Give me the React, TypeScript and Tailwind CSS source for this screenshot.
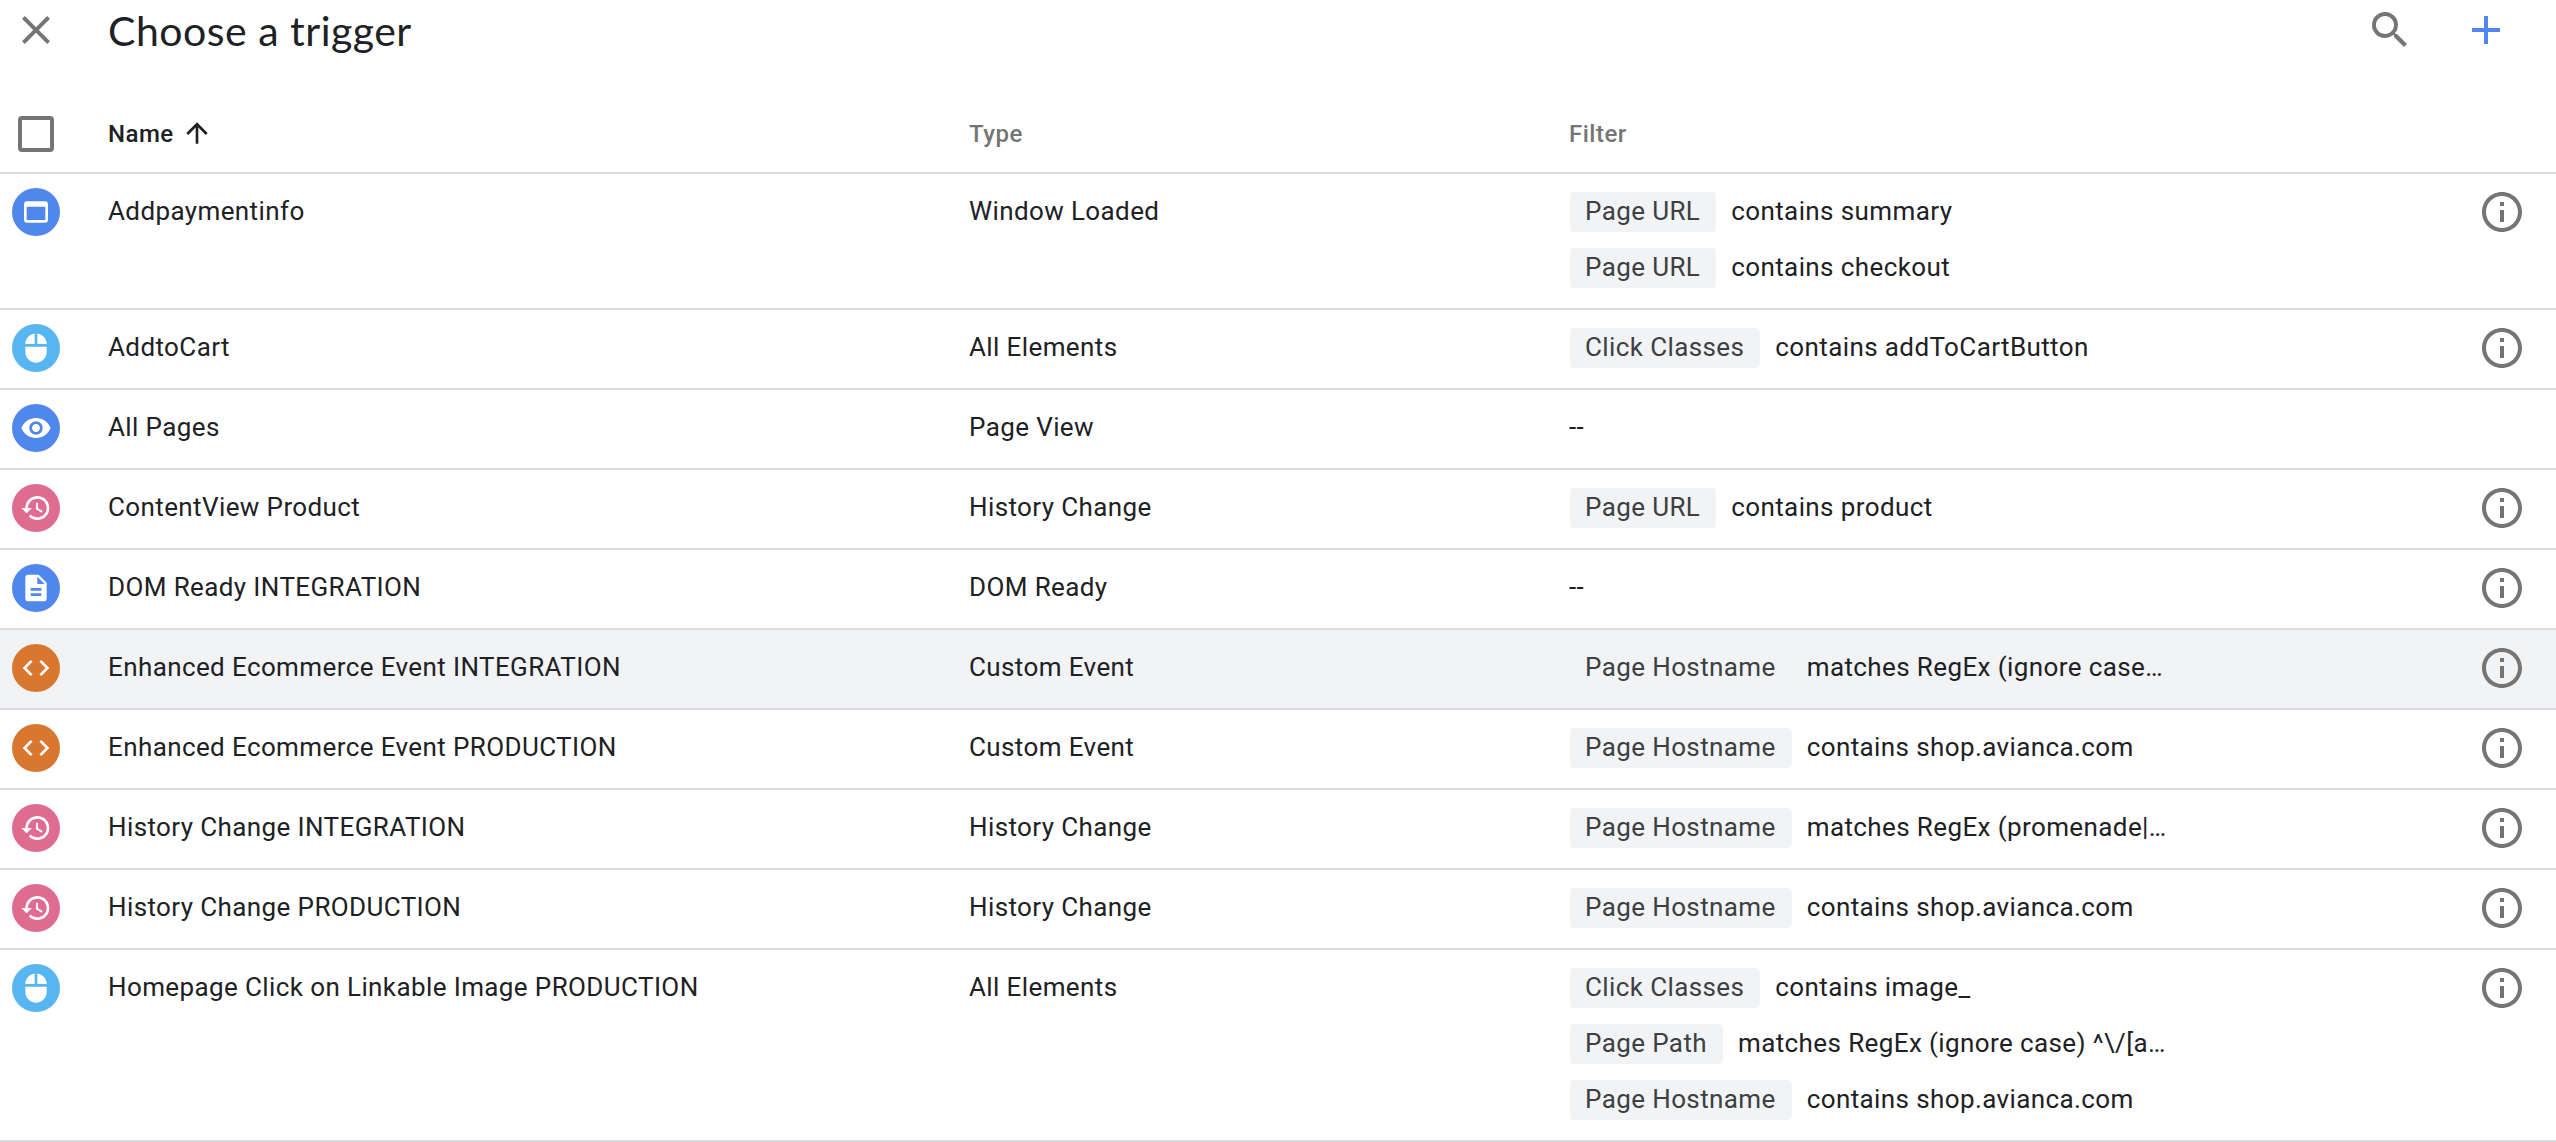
import type { ReactNode } from "react";

type IconProps = { d: string; className: string };

function Icon({ d, className }: IconProps) {
  return (
    <svg viewBox="0 0 24 24" fill="currentColor" className={className} aria-hidden="true">
      <path d={d} />
    </svg>
  );
}

const PATHS = {
  close:
    "M19 6.41L17.59 5 12 10.59 6.41 5 5 6.41 10.59 12 5 17.59 6.41 19 12 13.41 17.59 19 19 17.59 13.41 12z",
  search:
    "M15.5 14h-.79l-.28-.27A6.471 6.471 0 0 0 16 9.5 6.5 6.5 0 1 0 9.5 16c1.61 0 3.09-.59 4.23-1.57l.27.28v.79l5 4.99L20.49 19l-4.99-5zm-6 0C7.01 14 5 11.99 5 9.5S7.01 5 9.5 5 14 7.01 14 9.5 11.99 14 9.5 14z",
  add: "M19 13h-6v6h-2v-6H5v-2h6V5h2v6h6v2z",
  arrowUp: "M4 12l1.41 1.41L11 7.83V20h2V7.83l5.58 5.59L20 12l-8-8-8 8z",
  info: "M11 7h2v2h-2zm0 4h2v6h-2zm1-9C6.48 2 2 6.48 2 12s4.48 10 10 10 10-4.48 10-10S17.52 2 12 2zm0 18c-4.41 0-8-3.59-8-8s3.59-8 8-8 8 3.59 8 8-3.59 8-8 8z",
  window:
    "M19 4H5c-1.11 0-2 .9-2 2v12c0 1.1.89 2 2 2h14c1.1 0 2-.9 2-2V6c0-1.1-.89-2-2-2zm0 14H5V8h14v10z",
  mouse:
    "M13 1.07V9h7c0-4.08-3.05-7.44-7-7.93zM4 15c0 4.42 3.58 8 8 8s8-3.58 8-8v-4H4v4zm7-13.93C7.05 1.56 4 4.92 4 9h7V1.07z",
  eye: "M12 4.5C7 4.5 2.73 7.61 1 12c1.73 4.39 6 7.5 11 7.5s9.27-3.11 11-7.5c-1.73-4.39-6-7.5-11-7.5zM12 17c-2.76 0-5-2.24-5-5s2.24-5 5-5 5 2.24 5 5-2.24 5-5 5zm0-8c-1.66 0-3 1.34-3 3s1.34 3 3 3 3-1.34 3-3-1.34-3-3-3z",
  history:
    "M13 3c-4.97 0-9 4.03-9 9H1l3.89 3.89.07.14L9 12H6c0-3.87 3.13-7 7-7s7 3.13 7 7-3.13 7-7 7c-1.93 0-3.68-.79-4.94-2.06l-1.42 1.42C8.27 19.99 10.51 21 13 21c4.97 0 9-4.03 9-9s-4.03-9-9-9zm-1 5v5l4.28 2.54.72-1.21-3.5-2.08V8H12z",
  doc: "M14 2H6c-1.1 0-1.99.9-1.99 2L4 20c0 1.1.89 2 1.99 2H18c1.1 0 2-.9 2-2V8l-6-6zm2 16H8v-2h8v2zm0-4H8v-2h8v2zm-3-5V3.5L18.5 9H13z",
  code: "M9.4 16.6L4.8 12l4.6-4.6L8 6l-6 6 6 6 1.4-1.4zm5.2 0l4.6-4.6-4.6-4.6L16 6l6 6-6 6-1.4-1.4z",
};

const KINDS = {
  window: { color: "bg-[#4f87ed]", d: PATHS.window },
  mouse: { color: "bg-[#57b5f0]", d: PATHS.mouse },
  eye: { color: "bg-[#4f87ed]", d: PATHS.eye },
  history: { color: "bg-[#e06b91]", d: PATHS.history },
  doc: { color: "bg-[#4f87ed]", d: PATHS.doc },
  code: { color: "bg-[#d9772f]", d: PATHS.code },
};

type Trigger = {
  kind: keyof typeof KINDS;
  name: string;
  type: string;
  filters: [string, string][];
  info?: boolean;
  hovered?: boolean;
};

const TRIGGERS: Trigger[] = [
  {
    kind: "window",
    name: "Addpaymentinfo",
    type: "Window Loaded",
    filters: [
      ["Page URL", "contains summary"],
      ["Page URL", "contains checkout"],
    ],
    info: true,
  },
  { kind: "mouse", name: "AddtoCart", type: "All Elements", filters: [["Click Classes", "contains addToCartButton"]], info: true },
  { kind: "eye", name: "All Pages", type: "Page View", filters: [] },
  { kind: "history", name: "ContentView Product", type: "History Change", filters: [["Page URL", "contains product"]], info: true },
  { kind: "doc", name: "DOM Ready INTEGRATION", type: "DOM Ready", filters: [], info: true },
  {
    kind: "code",
    name: "Enhanced Ecommerce Event INTEGRATION",
    type: "Custom Event",
    filters: [["Page Hostname", "matches RegEx (ignore case…"]],
    info: true,
    hovered: true,
  },
  {
    kind: "code",
    name: "Enhanced Ecommerce Event PRODUCTION",
    type: "Custom Event",
    filters: [["Page Hostname", "contains shop.avianca.com"]],
    info: true,
  },
  {
    kind: "history",
    name: "History Change INTEGRATION",
    type: "History Change",
    filters: [["Page Hostname", "matches RegEx (promenade|…"]],
    info: true,
  },
  {
    kind: "history",
    name: "History Change PRODUCTION",
    type: "History Change",
    filters: [["Page Hostname", "contains shop.avianca.com"]],
    info: true,
  },
  {
    kind: "mouse",
    name: "Homepage Click on Linkable Image PRODUCTION",
    type: "All Elements",
    filters: [
      ["Click Classes", "contains image_"],
      ["Page Path", "matches RegEx (ignore case) ^\\/[a…"],
      ["Page Hostname", "contains shop.avianca.com"],
    ],
    info: true,
  },
];

function Cell({ children }: { children: ReactNode }) {
  return <div className="whitespace-nowrap leading-[38px]">{children}</div>;
}

function TriggerRow({ trigger }: { trigger: Trigger }) {
  const kind = KINDS[trigger.kind];
  return (
    <div
      className={`grid grid-cols-[96px_861px_600px_1fr] border-b-2 border-[#dadce0] pt-[18px] pr-[30px] pb-5 pl-3 ${
        trigger.hovered ? "bg-[#f1f3f4]" : ""
      }`}
    >
      <div className="flex h-10 items-center">
        <div className={`flex size-12 shrink-0 items-center justify-center rounded-full text-white ${kind.color}`}>
          <Icon d={kind.d} className="size-8" />
        </div>
      </div>
      <Cell>{trigger.name}</Cell>
      <Cell>{trigger.type}</Cell>
      <div className="flex items-start justify-between">
        {trigger.filters.length === 0 ? (
          <Cell>--</Cell>
        ) : (
          <div className="ml-px flex flex-col gap-4">
            {trigger.filters.map(([variable, condition], i) => (
              <div key={i} className="flex h-10 gap-[15px] whitespace-nowrap leading-[38px]">
                <span className="rounded bg-[#f1f3f4] pr-4 pl-[15px] text-[#3c4043]">{variable}</span>
                <span>{condition}</span>
              </div>
            ))}
          </div>
        )}
        {trigger.info && (
          <div className="flex h-10 items-center text-[#757575]">
            <Icon d={PATHS.info} className="size-12" />
          </div>
        )}
      </div>
    </div>
  );
}

export default function App() {
  return (
    <div className="h-[1142px] w-[2556px] overflow-hidden bg-white font-['Roboto',sans-serif] text-[26px] tracking-[0.39px] text-[#202124]">
      <header className="flex h-24 items-start pt-1.5 pr-[46px] pl-3 text-[#757575]">
        <Icon d={PATHS.close} className="size-12" />
        <h1 className="ml-12 flex-1 font-['Lato',sans-serif] text-[41px] leading-[49px] tracking-[0.5px] text-[#202124]">
          Choose a trigger
        </h1>
        <Icon d={PATHS.search} className="size-12" />
        <Icon d={PATHS.add} className="ml-12 size-12 text-[#4f87ed]" />
      </header>

      <div className="grid h-[78px] grid-cols-[96px_861px_600px_1fr] items-center border-b-2 border-[#dadce0] pl-3 text-[24px] font-medium tracking-[0.5px] text-[#757575]">
        <div className="ml-1.5 size-9 rounded border-4 border-[#757575]" />
        <div className="flex items-center text-[#202124]">
          Name
          <Icon d={PATHS.arrowUp} className="mb-[3px] ml-[7px] size-8" />
        </div>
        <div>Type</div>
        <div>Filter</div>
      </div>

      {TRIGGERS.map((trigger) => (
        <TriggerRow key={trigger.name} trigger={trigger} />
      ))}
    </div>
  );
}
